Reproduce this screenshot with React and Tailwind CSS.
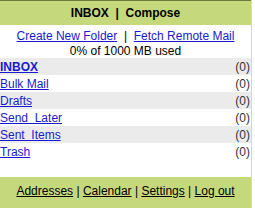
export default function App() {
  const folders = [
    { name: "INBOX", bold: true },
    { name: "Bulk Mail" },
    { name: "Drafts" },
    { name: "Send\u00a0\u00a0Later" },
    { name: "Sent\u00a0\u00a0Items" },
    { name: "Trash" },
  ];
  return (
    <div className="w-[255px] h-[208px] bg-white overflow-hidden flex" style={{ fontFamily: '"Liberation Sans", Arial, sans-serif' }}>
      <div className="w-[252px] flex flex-col border-r border-[#d6d6d6]">
        <div className="h-[25px] bg-[#c6d87c] border-t border-[#6f7d45] flex items-center justify-center text-[12px] font-bold text-black leading-none">
          INBOX&nbsp;&nbsp;|&nbsp;&nbsp;Compose
        </div>
        <div className="h-[17px] mt-[2px] flex items-center justify-center text-[12px] leading-none">
          <a href="#" className="text-[#1a1ad0] underline">Create New Folder</a>
          <span className="text-black">&nbsp;&nbsp;|&nbsp;&nbsp;</span>
          <a href="#" className="text-[#1a1ad0] underline">Fetch Remote Mail</a>
        </div>
        <div className="h-[14px] flex items-center justify-center text-[12px] leading-none text-black">
          0% of 1000 MB used
        </div>
        <div className="flex flex-col">
          {folders.map((f, i) => (
            <div
              key={i}
              className={`h-[17px] flex items-center justify-between text-[12px] leading-none ${i % 2 === 0 ? "bg-[#ebebeb]" : "bg-white"}`}
            >
              <a href="#" className={`text-[#1a1ad0] underline ${f.bold ? "font-bold" : ""}`}>{f.name}</a>
              <span className="text-[#333] pr-[1px]">(0)</span>
            </div>
          ))}
        </div>
        <div className="h-[17px]" />
        <div className="flex-1 bg-[#c6d87c] flex justify-center pt-[6px] text-[12px] leading-none text-black">
          <span className="h-[16px] flex items-center">
            <a href="#" className="underline">Addresses</a>&nbsp;|&nbsp;
            <a href="#" className="underline">Calendar</a>&nbsp;|&nbsp;
            <a href="#" className="underline">Settings</a>&nbsp;|&nbsp;
            <a href="#" className="underline">Log out</a>
          </span>
        </div>
      </div>
    </div>
  );
}
